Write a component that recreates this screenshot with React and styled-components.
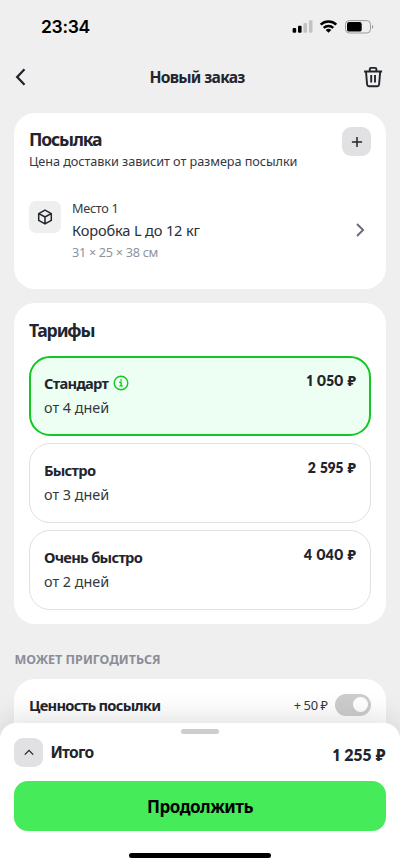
import React from 'react';
import styled, { createGlobalStyle } from 'styled-components';

const GlobalStyle = createGlobalStyle`
	* {
		box-sizing: border-box;
	}
	body {
		margin: 0;
		background: #efefef;
		color: #22252d;
		font-family: 'Noto Sans', sans-serif;
	}
	button {
		border: 0;
		padding: 0;
		color: inherit;
		font-family: inherit;
		background: none;
	}
	h1, h2, h3, p {
		margin: 0;
	}
	svg {
		display: block;
		flex: none;
	}
`;
const Screen = styled.div`
	position: relative;
	width: 400px;
	height: 866px;
	overflow: hidden;
	background: #efefef;
`;
const StatusBar = styled.div`
	display: flex;
	align-items: center;
	justify-content: space-between;
	height: 53px;
	padding: 0 26px 0 41px;
	color: #000;
`;
const Time = styled.span`
	font-family: Inter, sans-serif;
	font-size: 17.5px;
	font-weight: 600;
	letter-spacing: -0.3px;
`;
const Header = styled.header`
	display: flex;
	align-items: center;
	justify-content: space-between;
	height: 48px;
	padding: 0 16px 0 10px;
`;
const Title = styled.h1`
	font-size: 15.6px;
	line-height: 22px;
	font-weight: 700;
	letter-spacing: -0.75px;
	word-spacing: 0.5px;
`;
const IconButton = styled.button`
	display: flex;
	align-items: center;
	justify-content: center;
	width: 22px;
	height: 24px;
`;
const Main = styled.main`
	display: flex;
	flex-direction: column;
	padding: 11.5px 14.4px 0;
`;
const Card = styled.section`
	height: ${(p) => p.$height}px;
	margin-bottom: 14px;
	padding: 14.6px;
	border-radius: 21px;
	background: #fff;
`;
const CardTop = styled.div`
	display: flex;
	justify-content: space-between;
	height: 74px;
`;
const Heading = styled.h2`
	font-size: 17.6px;
	line-height: 24px;
	font-weight: 700;
	letter-spacing: -1.15px;
`;
const Note = styled.p`
	font-size: 12.7px;
	line-height: 21px;
	letter-spacing: ${(p) => p.$spacing || '-0.07px'};
	color: ${(p) => p.$color || '#353840'};
`;
const SquareButton = styled.button`
	display: flex;
	align-items: center;
	justify-content: center;
	width: 29px;
	height: 29px;
	border-radius: 9px;
	background: #e1e1e3;
`;
const Place = styled.div`
	display: flex;
	align-items: flex-start;
`;
const BoxIcon = styled.div`
	display: flex;
	align-items: center;
	justify-content: center;
	width: 32px;
	height: 32px;
	margin-right: 11px;
	border-radius: 7px;
	background: #efefef;
`;
const PlaceInfo = styled.div`
	flex: 1;
	margin-top: -3px;
`;
const PlaceName = styled.p`
	font-size: 14.6px;
	line-height: 23px;
	letter-spacing: -0.15px;
	color: #2c2f37;
`;
const PlaceArrow = styled.div`
	margin: 22px 6px 0 0;
`;
const TariffList = styled.div`
	display: flex;
	flex-direction: column;
	gap: 7px;
	margin-top: 14px;
`;
const TariffItem = styled.div`
	display: flex;
	justify-content: space-between;
	height: 80px;
	padding: ${(p) => (p.$active ? '13px' : '14px')};
	border: ${(p) => (p.$active ? '2px solid #14c823' : '1px solid #e1e1e3')};
	border-radius: 21px;
	background: ${(p) => (p.$active ? '#edfff2' : '#fff')};
`;
const TariffName = styled.h3`
	display: flex;
	align-items: center;
	gap: 5px;
	font-size: 14.7px;
	line-height: 24px;
	font-weight: 700;
	letter-spacing: -0.72px;
`;
const Term = styled.p`
	font-size: 14.4px;
	line-height: 25px;
	color: #353840;
`;
const Price = styled.span`
	font-family: Lato, 'Noto Sans', sans-serif;
	font-size: ${(p) => p.$size || 14}px;
	line-height: 20px;
	font-weight: 800;
	font-variant-numeric: proportional-nums;
	word-spacing: 0.8px;
	white-space: nowrap;
`;
const SectionTitle = styled.h2`
	margin: 11.5px 0 9.5px;
	font-size: 12.5px;
	line-height: 20px;
	font-weight: 700;
	color: #8a8d95;
	text-transform: uppercase;
`;
const Option = styled.div`
	display: flex;
	align-items: center;
	height: 24px;
	margin-top: -1px;
`;
const OptionName = styled(TariffName)`
	flex: 1;
`;
const OptionPrice = styled.span`
	margin-right: 7px;
	font-size: 12.9px;
	word-spacing: -1px;
	color: #353840;
`;
const Toggle = styled.div`
	display: flex;
	align-items: center;
	justify-content: flex-end;
	width: 36px;
	height: 22px;
	padding: 3px;
	border-radius: 11px;
	background: #cdcdcd;
`;
const Knob = styled.div`
	width: 15px;
	height: 15px;
	border-radius: 50%;
	background: #fff;
`;
const Sheet = styled.div`
	position: absolute;
	left: 0;
	right: 0;
	bottom: 0;
	display: flex;
	flex-direction: column;
	height: 143px;
	padding: 6px 14.4px 8px;
	border-radius: 16px 16px 0 0;
	background: #fff;
	box-shadow: 0 -4px 30px rgba(0, 0, 0, 0.13);
`;
const Handle = styled.div`
	align-self: center;
	width: 38px;
	height: 5px;
	border-radius: 3px;
	background: #cdcdcd;
`;
const Total = styled.div`
	display: flex;
	align-items: center;
	height: 29px;
	margin: 4px 0 14px;
`;
const TotalName = styled(Title)`
	flex: 1;
	margin: -2px 0 0 7px;
`;
const TotalPrice = styled(Price)`
	margin-top: 5px;
`;
const Submit = styled.button`
	height: 50px;
	flex: none;
	border-radius: 14px;
	background: #46eb5a;
	color: #000;
	font-size: 17px;
	font-weight: 700;
	letter-spacing: -0.5px;
`;
const HomeIndicator = styled.div`
	align-self: center;
	width: 142px;
	height: 5px;
	margin-top: 22px;
	border-radius: 3px;
	background: #000;
`;

const StatusIcons = () => (
	<svg width="82" height="16" viewBox="0 0 82 16">
		<rect x="0.6" y="9" width="3.6" height="4.8" rx="1" />
		<rect x="6" y="6.8" width="3.6" height="7" rx="1" />
		<rect x="11.4" y="4.1" width="3.6" height="9.7" rx="1" fill="#c3c3c3" />
		<rect x="16.9" y="1.2" width="3.6" height="12.6" rx="1" fill="#c3c3c3" />
		<path d="M28.7 5.6a11.6 11.6 0 0 1 15.6 0" fill="none" stroke="#000" strokeWidth="2.5" />
		<path d="M31.7 8.9a7.1 7.1 0 0 1 9.6 0" fill="none" stroke="#000" strokeWidth="2.4" />
		<path d="M33.7 11a4 4 0 0 1 5.6 0l-2.8 2.8z" />
		<rect x="53.5" y="1.6" width="25" height="12.4" rx="3.7" fill="none" stroke="#9b9b9b" />
		<rect x="55" y="3" width="14.7" height="9.6" rx="2.2" />
		<path d="M80 5.9c1.8.8 1.8 3 0 3.8z" fill="#9b9b9b" />
	</svg>
);
const BackIcon = () => (
	<svg width="18" height="20" viewBox="0 0 18 20" fill="none" stroke="#22252d" strokeWidth="2.3">
		<path d="M12.5 2.3 5.2 10l7.3 7.7" />
	</svg>
);
const TrashIcon = () => (
	<svg width="20" height="22" viewBox="0 0 20 22" fill="none" stroke="#22252d" strokeWidth="1.9" strokeLinejoin="round">
		<path d="M1.1 5.5h18M6.8 5.3V3.2q0-1.3 1.3-1.3h4q1.3 0 1.3 1.3v2.1M3 5.5l1.1 13q.15 1.7 1.8 1.7h8.4q1.65 0 1.8-1.7l1.1-13M8.2 9.1v7.3M12 9.1v7.3" />
	</svg>
);
const PlusIcon = () => (
	<svg width="12" height="12" viewBox="0 0 12 12" stroke="#22252d" strokeWidth="1.5">
		<path d="M.9 6h10.2M6 .9v10.2" />
	</svg>
);
const CubeIcon = () => (
	<svg width="16" height="18" viewBox="0 0 16 18" fill="none" stroke="#22252d" strokeWidth="1.5" strokeLinejoin="round">
		<path d="m8 2.1 6.3 3.5v6.8L8 15.9l-6.3-3.5V5.6zM1.9 5.7 8 9l6.1-3.3M8 9v6.8" />
	</svg>
);
const ForwardIcon = () => (
	<svg width="10" height="14" viewBox="0 0 10 14" fill="none" stroke="#686b76" strokeWidth="1.9">
		<path d="M2 1 8.1 7 2 13" />
	</svg>
);
const InfoIcon = () => (
	<svg width="16" height="16" viewBox="0 0 16 16" fill="none" stroke="#14c823" strokeWidth="1.4">
		<circle cx="8" cy="8" r="6.8" />
		<path d="M6.2 7.2h1.9v3.5M6.4 10.9h3.4M7.3 5h1.5" />
	</svg>
);
const UpIcon = () => (
	<svg width="10" height="7" viewBox="0 0 10 7" fill="none" stroke="#22252d" strokeWidth="1.3">
		<path d="m.8 5.6 4.2-4.2 4.2 4.2" />
	</svg>
);

const tariffs = [
	{ name: 'Стандарт', term: 'от 4 дней', price: '1 050 ₽', active: true },
	{ name: 'Быстро', term: 'от 3 дней', price: '2 595 ₽' },
	{ name: 'Очень быстро', term: 'от 2 дней', price: '4 040 ₽' },
];

const Tariff = ({ tariff }) => {
	return (
		<TariffItem $active={tariff.active}>
			<div>
				<TariffName>
					{tariff.name}
					{tariff.active && <InfoIcon />}
				</TariffName>
				<Term>{tariff.term}</Term>
			</div>
			<Price>{tariff.price}</Price>
		</TariffItem>
	);
};

const App = () => {
	return (
		<Screen>
			<GlobalStyle />
			<StatusBar>
				<Time>23:34</Time>
				<StatusIcons />
			</StatusBar>
			<Header>
				<IconButton aria-label="Назад">
					<BackIcon />
				</IconButton>
				<Title>Новый заказ</Title>
				<IconButton aria-label="Удалить">
					<TrashIcon />
				</IconButton>
			</Header>
			<Main>
				<Card $height={176.5}>
					<CardTop>
						<div>
							<Heading>Посылка</Heading>
							<Note>Цена доставки зависит от размера посылки</Note>
						</div>
						<SquareButton aria-label="Добавить">
							<PlusIcon />
						</SquareButton>
					</CardTop>
					<Place>
						<BoxIcon>
							<CubeIcon />
						</BoxIcon>
						<PlaceInfo>
							<Note $spacing="-0.3px">Место 1</Note>
							<PlaceName>Коробка L до 12 кг</PlaceName>
							<Note $color="#8f929a" $spacing="-0.3px">31 × 25 × 38 см</Note>
						</PlaceInfo>
						<PlaceArrow>
							<ForwardIcon />
						</PlaceArrow>
					</Place>
				</Card>
				<Card $height={321}>
					<Heading>Тарифы</Heading>
					<TariffList>
						{tariffs.map((tariff) => (
							<Tariff key={tariff.name} tariff={tariff} />
						))}
					</TariffList>
				</Card>
				<SectionTitle>Может пригодиться</SectionTitle>
				<Card $height={80}>
					<Option>
						<OptionName>Ценность посылки</OptionName>
						<OptionPrice>+ 50 ₽</OptionPrice>
						<Toggle>
							<Knob />
						</Toggle>
					</Option>
				</Card>
			</Main>
			<Sheet>
				<Handle />
				<Total>
					<SquareButton aria-label="Подробнее">
						<UpIcon />
					</SquareButton>
					<TotalName as="h2">Итого</TotalName>
					<TotalPrice $size={16}>1 255 ₽</TotalPrice>
				</Total>
				<Submit>Продолжить</Submit>
				<HomeIndicator />
			</Sheet>
		</Screen>
	);
};

export default App;
